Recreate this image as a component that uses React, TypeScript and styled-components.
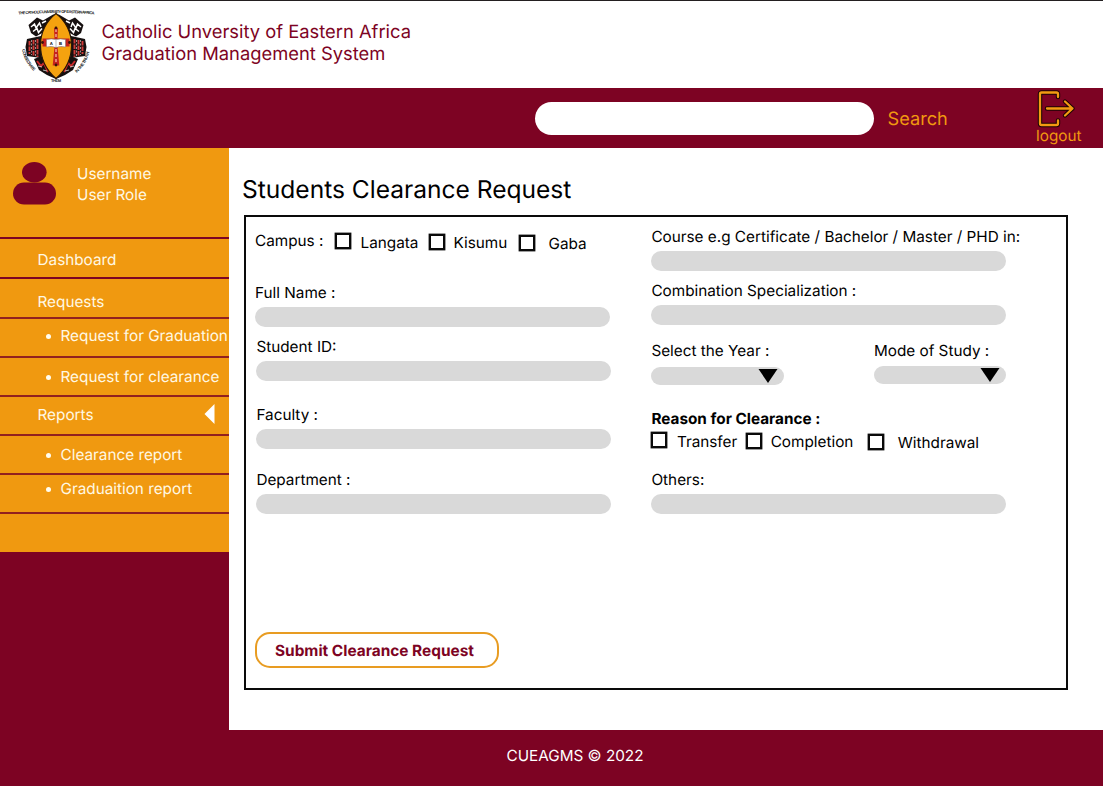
import React from 'react';
import styled, { createGlobalStyle } from 'styled-components';

const maroon = '#7d0323';
const orange = '#f09910';

const GlobalStyle = createGlobalStyle`
  * { box-sizing: border-box; }
  body { margin: 0; background: #fff; font-family: Inter, "Liberation Sans", sans-serif; font-size: 15.3px; text-rendering: geometricPrecision; }
`;

const Page = styled.div`
  width: 1103px;
  height: 786px;
  display: flex;
  flex-direction: column;
  overflow: hidden;
  background: #fff;
`;

const Header = styled.header`
  height: 88px;
  flex: none;
  display: flex;
  border-top: 1px solid #231f20;
  padding: 7px 0 0 16px;
`;

const Brand = styled.h1`
  margin: 13px 0 0 5.5px;
  font-size: 18.35px;
  font-weight: 400;
  line-height: 22px;
  color: ${maroon};
  white-space: nowrap;
`;

const TopBar = styled.div`
  height: 60px;
  flex: none;
  display: flex;
  background: ${maroon};
  color: ${orange};
  padding-left: 535px;
`;

const SearchBox = styled.input`
  width: 339px;
  height: 33px;
  margin: 13.5px 13.5px 0 0;
  padding: 0 18px;
  border: 0;
  border-radius: 17px;
  background: #fff;
  outline: none;
`;

const SearchLabel = styled.span`
  width: 148.5px;
  margin-top: 20px;
  font-size: 18.2px;
  line-height: 22px;
`;

const Logout = styled.a`
  display: flex;
  flex-direction: column;
  font-size: 15.3px;
  line-height: 18px;
  padding-top: 2px;
  svg { display: block; margin: -1px 0 -1px 0; }
`;

const Body = styled.div`
  display: flex;
  flex: 1;
  min-height: 0;
`;

const Sidebar = styled.aside`
  width: 229px;
  flex: none;
  background: ${maroon};
  color: #fff8e4;
`;

const Menu = styled.nav`
  height: 403.5px;
  background: ${orange};
`;

const User = styled.div`
  height: 91px;
  display: flex;
  padding: 14px 0 0 13px;
  border-bottom: 2px solid ${maroon};
`;

const UserText = styled.div`
  margin: 1px 0 0 21px;
  line-height: 21px;
`;

const Item = styled.div<{ $h: number; $top: number; $sub?: boolean; $line?: string }>`
  height: ${p => p.$h}px;
  display: flex;
  align-items: flex-start;
  padding: ${p => p.$top}px 0 0 ${p => (p.$sub ? 46 : 37.5)}px;
  border-bottom: 2px solid ${p => p.$line ?? '#92201f'};
  line-height: 20px;
  white-space: nowrap;
`;

const Dot = styled.i`
  width: 5px;
  height: 5px;
  margin: 8px 9.5px 0 0;
  border-radius: 50%;
  background: #fffdf0;
`;

const Caret = styled.svg`
  margin: -1px 14px 0 auto;
`;

const Main = styled.main`
  flex: 1;
  padding: 0 0 0 15px;
`;

const Title = styled.h2`
  margin: 26px 0 0 -2px;
  height: 41px;
  font-size: 24.55px;
  font-weight: 400;
  line-height: 30px;
  color: #000;
`;

const Panel = styled.form`
  width: 824px;
  height: 475px;
  border: 2px solid #0a0a0a;
  display: flex;
  color: #000;
  line-height: 20px;
  white-space: nowrap;
`;

const Column = styled.div<{ $left: number; $width: number }>`
  width: ${p => p.$width}px;
  margin-left: ${p => p.$left}px;
  flex: none;
`;

const Checks = styled.div<{ $h: number }>`
  height: ${p => p.$h}px;
  display: flex;
  align-items: flex-start;
`;

const CampusLabel = styled.span`
  width: 80px;
  margin-top: 14px;
`;

const Check = styled.label<{ $w: number; $top: number; $gap: number }>`
  display: flex;
  align-items: flex-start;
  width: ${p => p.$w}px;
  gap: ${p => p.$gap}px;
  margin-top: ${p => p.$top}px;
`;

const Box = styled.span<{ $down?: number }>`
  width: 16px;
  height: 16px;
  flex: none;
  margin-top: ${p => p.$down ?? 1}px;
  border: 2px solid #0a0a0a;
  box-shadow: 0 0 0 0.4px #0a0a0a;
`;

const Field = styled.label<{ $top: number; $inset?: number; $gap?: number }>`
  display: flex;
  flex-direction: column;
  gap: ${p => p.$gap ?? 4}px;
  margin: ${p => p.$top}px 0 0 ${p => p.$inset ?? 0}px;
`;

const Bar = styled.span<{ $short?: boolean }>`
  display: flex;
  justify-content: flex-end;
  align-items: center;
  width: ${p => (p.$short ? 132.5 : 355)}px;
  height: ${p => (p.$short ? 18 : 20)}px;
  padding-right: 6px;
  border-radius: 10px;
  background: #d9d9d9;
`;

const Pair = styled.div`
  display: flex;
  justify-content: space-between;
  width: 355px;
  height: 84px;
`;

const Reason = styled.div`
  font-weight: 700;
  height: 20px;
`;

const Submit = styled.button`
  display: block;
  width: 244px;
  height: 36px;
  margin-top: 118px;
  padding: 0 0 0 18px;
  border: 2px solid #e89c22;
  border-radius: 15px;
  background: #fff;
  color: ${maroon};
  font: 700 15.4px Inter, "Liberation Sans", sans-serif;
  text-rendering: geometricPrecision;
  text-align: left;
`;

const Footer = styled.footer`
  height: 56px;
  flex: none;
  background: ${maroon};
  color: #fff;
  text-align: center;
  line-height: 20px;
  padding: 16px 0 0 47px;
`;

const CrestSide = () => (
  <g>
    <path d="M54 14L43 20.500L37 17.500L28.500 25L31 33L36 36.500L44 32ZM27 39L41 36V58L27 56L25.500 47ZM34 59L42 56L56 73V79L47 75L39 70Z" fill="#161010" />
    <path d="M29.500 41v13M33.500 40v16M37.500 39v18" stroke="#cf3a38" strokeWidth="1.900" strokeDasharray="4.500 1" />
    <path d="M31.500 40v15M35.500 40v16" stroke="#f4e6e2" strokeWidth=".6" strokeDasharray="2 1.500" />
    <path d="M37 61l4 5 3-3 4 9" stroke="#c92a2b" strokeWidth="2" fill="none" />
    <path d="M31 27l3.500-3 1.500 4 3.500-5 1.500 4M33 31.500l4-3 1.500 4 3.500-4M42 23l4-2" stroke="#fff" strokeWidth="1.500" fill="none" />
    <path d="M38 66l4 1M43 70l4 1" stroke="#fff" strokeWidth=".7" fill="none" />
  </g>
);

const Crest = () => (
  <svg width="80" height="76" viewBox="16 8 80 76">
    <defs>
      <path id="arcTop" d="M18.500 14.500 Q57 11.500 96 14.500" />
      <path id="arcLeft" d="M22 49.500 Q24.500 62 34 71.500" />
      <path id="arcRight" d="M76.500 73 Q87 64 89.500 51" />
    </defs>
    <g fontFamily="Liberation Sans, sans-serif" fontWeight="700" fill="#222">
      <text fontSize="4"><textPath href="#arcTop" textLength="76">THE CATHOLIC UNIVERSITY OF EASTERN AFRICA</textPath></text>
      <text fontSize="4.300"><textPath href="#arcLeft" textLength="25">CONSECRATE</textPath></text>
      <text fontSize="4.300"><textPath href="#arcRight" textLength="25">IN THE TRUTH</textPath></text>
      <text x="51" y="81.800" fontSize="4" textLength="10">THEM</text>
    </g>
    <CrestSide />
    <g transform="matrix(-1 0 0 1 112 0)"><CrestSide /></g>
    <path d="M56 13.500C46 21 40.500 33 40.500 45C40.500 58 46 70 56 78.500C66 70 71.500 58 71.500 45C71.500 33 66 21 56 13.500Z" fill="#f5a20f" stroke="#2a1605" strokeWidth="1.200" />
    <path d="M54 28h4l-.5 10.500h12v8h-12l1.800 19h-6.600l1.800-19h-12v-8h12z" fill="#c5221f" />
    <path d="M56 29v35" stroke="#f3b9a0" strokeWidth="1.300" strokeDasharray="3 2" />
    <circle cx="56" cy="28" r="1.400" fill="#3a1208" />
    <circle cx="56" cy="65" r="1.400" fill="#3a1208" />
    <circle cx="42.500" cy="42.500" r="1.400" fill="#3a1208" />
    <circle cx="69.500" cy="42.500" r="1.400" fill="#3a1208" />
    <path d="M46.500 39.500q5-1.200 9.500 0q4.500-1.200 9.500 0v7.500q-5-1.200-9.500.5q-4.500-1.700-9.500-.5z" fill="#fff" stroke="#777" strokeWidth=".5" />
    <path d="M56 39.500v8" stroke="#777" strokeWidth=".5" />
    <text x="49.700" y="44.800" fontSize="4.300" fontWeight="700" fontFamily="Liberation Sans, sans-serif">A</text>
    <text x="59" y="44.800" fontSize="4.300" fontWeight="700" fontFamily="Liberation Sans, sans-serif">B</text>
  </svg>
);

const exitPath = 'M22 8V5Q22 3.500 20.500 3.500H5.500Q4 3.500 4 5V34.500Q4 36 5.500 36H20.500Q22 36 22 34.500V31.500M11 19.500H36.500M29 12.500L36.500 19.500L29 26.500';

const LogoutIcon = () => (
  <svg width="42" height="39" viewBox="0 0 42 39" fill="none" strokeLinecap="round" strokeLinejoin="round">
    <path d={exitPath} stroke="#1c0503" strokeWidth="4.400" />
    <path d={exitPath} stroke="#f39a12" strokeWidth="2.300" />
  </svg>
);

const Avatar = () => (
  <svg width="43" height="43" viewBox="0 0 43 43" fill={maroon}>
    <ellipse cx="21.300" cy="10.300" rx="12.300" ry="10.300" />
    <rect y="20.500" width="43" height="22" rx="11" />
  </svg>
);

const Triangle = () => (
  <svg width="20" height="14" viewBox="0 0 20 14"><path d="M0.500 0H19.500L10 14Z" fill="#000" /></svg>
);

export default function App() {
  return (
    <Page>
      <GlobalStyle />
      <Header>
        <Crest />
        <Brand>Catholic Unversity of Eastern Africa<br />Graduation Management System</Brand>
      </Header>
      <TopBar>
        <SearchBox />
        <SearchLabel>Search</SearchLabel>
        <Logout><LogoutIcon />logout</Logout>
      </TopBar>
      <Body>
        <Sidebar>
          <Menu>
            <User>
              <Avatar />
              <UserText>Username<br />User Role</UserText>
            </User>
            <Item $h={40} $top={11} $line={maroon}>Dashboard</Item>
            <Item $h={40} $top={13}>Requests</Item>
            <Item $h={39} $top={7} $sub><Dot />Request for Graduation</Item>
            <Item $h={39} $top={8.5} $sub><Dot />Request for clearance</Item>
            <Item $h={39} $top={8}>
              Reports
              <Caret width="11" height="20" viewBox="0 0 11 20"><path d="M10.500 0V20L0.500 10Z" fill="#fff" /></Caret>
            </Item>
            <Item $h={39} $top={9} $sub><Dot />Clearance report</Item>
            <Item $h={39} $top={4} $sub><Dot />Graduaition report</Item>
          </Menu>
        </Sidebar>
        <Main>
          <Title>Students Clearance Request</Title>
          <Panel>
            <Column $left={9} $width={396.4}>
              <Checks $h={66}>
                <CampusLabel>Campus :</CampusLabel>
                <Check $w={94} $top={16} $gap={9.5}><Box $down={0} />Langata</Check>
                <Check $w={90} $top={16} $gap={8.5}><Box />Kisumu</Check>
                <Check $w={80} $top={17} $gap={13.5}><Box />Gaba</Check>
              </Checks>
              <Field $top={0}>Full Name :<Bar /></Field>
              <Field $top={10} $inset={1.4}>Student ID:<Bar /></Field>
              <Field $top={24} $inset={1.4}>Faculty :<Bar /></Field>
              <Field $top={21} $inset={1.4}>Department :<Bar /></Field>
              <Submit type="button">Submit Clearance Request</Submit>
            </Column>
            <Column $left={0} $width={355}>
              <Field $top={10}>Course e.g Certificate / Bachelor / Master / PHD in:<Bar /></Field>
              <Field $top={10}>Combination Specialization :<Bar /></Field>
              <Pair>
                <Field $top={16} $gap={6}>Select the Year :<Bar $short><Triangle /></Bar></Field>
                <Field $top={16} $gap={5}>Mode of Study :<Bar $short><Triangle /></Bar></Field>
              </Pair>
              <Reason>Reason for Clearance :</Reason>
              <Checks $h={41}>
                <Check $w={94.3} $top={3} $gap={9.5}><Box $down={0} />Transfer</Check>
                <Check $w={122} $top={3} $gap={9}><Box />Completion</Check>
                <Check $w={120} $top={4} $gap={14}><Box />Withdrawal</Check>
              </Checks>
              <Field $top={0}>Others:<Bar /></Field>
            </Column>
          </Panel>
        </Main>
      </Body>
      <Footer>CUEAGMS © 2022</Footer>
    </Page>
  );
}
